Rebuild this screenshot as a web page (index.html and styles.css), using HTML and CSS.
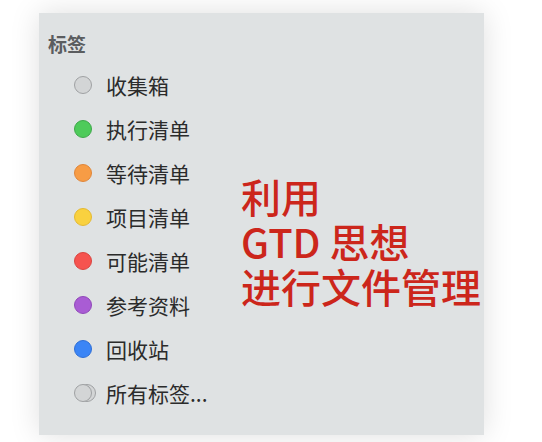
FILE: index.html
```html
<!DOCTYPE html>
<html lang="zh-CN">
<head>
<meta charset="utf-8">
<link rel="stylesheet" href="styles.css">
</head>
<body>
<div class="stage">
  <div class="panel">
    <div class="sidebar">
      <div class="title">标签</div>
      <ul class="tags">
        <li class="tag"><span class="dot gray"></span><span class="label">收集箱</span></li>
        <li class="tag"><span class="dot green"></span><span class="label">执行清单</span></li>
        <li class="tag"><span class="dot orange"></span><span class="label">等待清单</span></li>
        <li class="tag"><span class="dot yellow"></span><span class="label">项目清单</span></li>
        <li class="tag"><span class="dot red"></span><span class="label">可能清单</span></li>
        <li class="tag"><span class="dot purple"></span><span class="label">参考资料</span></li>
        <li class="tag"><span class="dot blue"></span><span class="label">回收站</span></li>
        <li class="tag"><span class="dot-pair"><span class="dot gray back"></span><span class="dot gray front"></span></span><span class="label">所有标签...</span></li>
      </ul>
    </div>
    <div class="note">
      <div class="line">利用</div>
      <div class="line">GTD 思想</div>
      <div class="line">进行文件管理</div>
    </div>
  </div>
</div>
</body>
</html>
```
FILE: styles.css
```css
html, body {
  margin: 0;
  padding: 0;
  background: #ffffff;
}
body {
  width: 542px;
  height: 442px;
  overflow: hidden;
  font-family: "Noto Sans CJK SC", "Noto Sans", sans-serif;
}
.stage {
  padding: 13px 0 0 39px;
}
.panel {
  width: 445px;
  height: 422px;
  background: #dfe2e3;
  box-shadow: 0 0 28px rgba(0, 0, 0, 0.13);
  display: flex;
  box-sizing: border-box;
}
.sidebar {
  width: 202px;
  padding: 19px 0 0 9px;
  box-sizing: border-box;
}
.title {
  font-size: 19px;
  line-height: 24px;
  font-weight: 700;
  color: #5b5d5f;
}
.tags {
  list-style: none;
  margin: 7px 0 0 0;
  padding: 0 0 0 26px;
}
.tag {
  height: 44px;
  display: flex;
  align-items: center;
  gap: 14px;
}
.label {
  font-size: 21px;
  color: #2b2b2b;
  white-space: nowrap;
}
.dot {
  width: 18px;
  height: 18px;
  border-radius: 50%;
  box-sizing: border-box;
  border: 1.5px solid;
  flex: none;
}
.gray { background: #d3d5d6; border-color: #9fa1a3; }
.green { background: #4ecb5a; border-color: #3ea84a; }
.orange { background: #f79c45; border-color: #e0863a; }
.yellow { background: #f9d13f; border-color: #e4b932; }
.red { background: #f6534f; border-color: #d94440; }
.purple { background: #a95cd4; border-color: #9048b9; }
.blue { background: #3b85f6; border-color: #2f6fd6; }
.dot-pair {
  position: relative;
  width: 22px;
  height: 18px;
  flex: none;
  margin-right: -4px;
}
.dot-pair .dot {
  position: absolute;
  top: 0;
}
.dot-pair .back { left: 4px; }
.dot-pair .front { left: 0; }
.note {
  margin-top: 161px;
  color: #cc261b;
  white-space: nowrap;
  font-family: "Noto Sans CJK SC", "Liberation Sans", sans-serif;
  font-weight: 500;
}
.line {
  font-size: 40px;
  line-height: 45px;
  height: 45px;
}
```
